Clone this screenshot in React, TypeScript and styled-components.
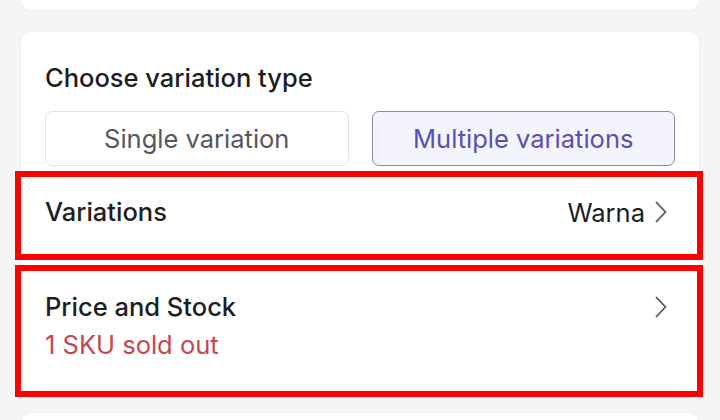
import React, { ReactElement } from 'react';
import styled, { createGlobalStyle } from 'styled-components';

const GlobalStyle = createGlobalStyle`
  html, body {
    margin: 0;
    padding: 0;
    background: #f4f5f7;
    font-family: Inter, "Noto Sans", sans-serif;
    -webkit-font-smoothing: antialiased;
  }
  * {
    box-sizing: border-box;
  }
`;

const Page = styled.div`
  width: 720px;
  height: 420px;
  overflow: hidden;
  padding: 0 21px;
  display: flex;
  flex-direction: column;
`;

const Card = styled.div<{ $top?: boolean; $bottom?: boolean }>`
  background: #ffffff;
  border-radius: ${(p) => (p.$top ? '0 0 10px 10px' : p.$bottom ? '10px 10px 0 0' : '10px')};
  box-shadow: 0 0 0 1px #eef0f3;
  flex-shrink: 0;
`;

const TopCard = styled(Card)`
  height: 10px;
  margin-bottom: 22px;
`;

const BottomCard = styled(Card)`
  height: 40px;
  margin-top: 16px;
`;

const MainCard = styled(Card)`
  padding: 31px 0 0 0;
  display: flex;
  flex-direction: column;
`;

const SectionTitle = styled.div`
  font-size: 25.5px;
  line-height: 30px;
  font-weight: 500;
  color: #1d1d22;
  padding: 0 24px;
`;

const TypeRow = styled.div`
  display: grid;
  grid-template-columns: 1fr 1fr;
  gap: 23px;
  margin: 18px 24px 5px 24px;
`;

const TypeButton = styled.button<{ $active?: boolean }>`
  height: 55px;
  border-radius: 7px;
  font-family: inherit;
  font-size: 25.5px;
  font-weight: 400;
  cursor: pointer;
  border: 1px solid ${(p) => (p.$active ? '#8c89ad' : '#e3e4e8')};
  background: ${(p) => (p.$active ? '#f4f4fd' : '#ffffff')};
  color: ${(p) => (p.$active ? '#5a4fb4' : '#56575c')};
`;

const NavRow = styled.div<{ $tall?: boolean }>`
  margin: 0 -4px 5px -6px;
  border: 6px solid #ff0000;
  height: ${(p) => (p.$tall ? '132px' : '89px')};
  padding: ${(p) => (p.$tall ? '21px' : '20px')} 30px 0 24px;
  display: flex;
  justify-content: space-between;
  align-items: flex-start;
  background: #ffffff;
  &:last-child {
    margin-bottom: 0;
  }
`;

const NavText = styled.div`
  display: flex;
  flex-direction: column;
  gap: 8px;
`;

const NavLabel = styled.div`
  font-size: 25.5px;
  line-height: 30px;
  font-weight: 500;
  color: #1d1d22;
`;

const NavNote = styled.div`
  font-size: 25.5px;
  line-height: 30px;
  color: #c4484f;
`;

const NavValue = styled.div`
  display: flex;
  align-items: center;
  gap: 10px;
  height: 30px;
  font-size: 25.5px;
  color: #1d1d22;
`;

function Chevron(): ReactElement {
  return (
    <svg width="12" height="22" viewBox="0 0 12 22" fill="none">
      <polyline points="1.5,1.5 10.5,11 1.5,20.5" stroke="#55565b" strokeWidth="1.8" strokeLinecap="round" strokeLinejoin="round" />
    </svg>
  );
}

function App(): ReactElement {
  return (
    <>
      <GlobalStyle />
      <Page>
        <TopCard $top />
        <MainCard>
          <SectionTitle>Choose variation type</SectionTitle>
          <TypeRow>
            <TypeButton>Single variation</TypeButton>
            <TypeButton $active>Multiple variations</TypeButton>
          </TypeRow>
          <NavRow>
            <NavLabel>Variations</NavLabel>
            <NavValue>
              Warna
              <Chevron />
            </NavValue>
          </NavRow>
          <NavRow $tall>
            <NavText>
              <NavLabel>Price and Stock</NavLabel>
              <NavNote>1 SKU sold out</NavNote>
            </NavText>
            <NavValue>
              <Chevron />
            </NavValue>
          </NavRow>
        </MainCard>
        <BottomCard $bottom />
      </Page>
    </>
  );
}

export default App;
